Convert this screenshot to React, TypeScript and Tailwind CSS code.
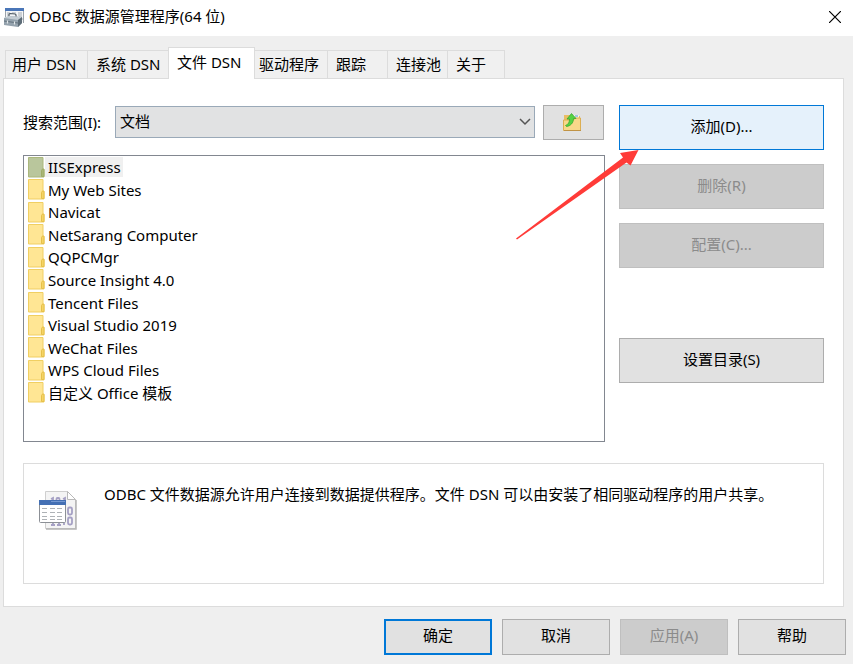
import type { ReactNode } from "react";
import { clsx } from "clsx";

const tabs = [
  { name: "用户 DSN", size: "w-[83px] pl-1.5" },
  { name: "系统 DSN", size: "w-[82px] pl-2" },
  { name: "文件 DSN", size: "w-[87px] pl-2", selected: true },
  { name: "驱动程序", size: "w-[74px] pl-1" },
  { name: "跟踪", size: "w-[61px] pl-2" },
  { name: "连接池", size: "w-[61px] pl-2" },
  { name: "关于", size: "w-[58px] pl-2" },
];

const folders = [
  "IISExpress",
  "My Web Sites",
  "Navicat",
  "NetSarang Computer",
  "QQPCMgr",
  "Source Insight 4.0",
  "Tencent Files",
  "Visual Studio 2019",
  "WeChat Files",
  "WPS Cloud Files",
  "自定义 Office 模板",
];

function ToolboxIcon() {
  return (
    <svg viewBox="0 0 20 20" className="size-5" aria-hidden="true">
      <path d="M1 1h19v13H1z" fill="#f3f5f7" />
      <path d="M1 0h19v3H1z" fill="#4a76b8" />
      <path d="M3 5h3M8 5h4M14 5h4M3 7h2M14 7h4M15 9h3M19 11h-1" stroke="#a4abb2" />
      <path d="M19.500 3v12M1.500 3v6" stroke="#9ba3aa" />
      <path d="M5 9V6.500Q5 5.500 6 5.500l5 .5q1 0 1 1V9" fill="none" stroke="#4c5862" strokeWidth="1.200" />
      <path d="M0 10l5-2 13 1v6l-4 4-14-2z" fill="#94a2ad" />
      <path d="M0 10l5-2 13 1-4 3z" fill="#c3ccd3" />
      <path d="M14 12l4-3v6l-4 4z" fill="#5d6c77" />
      <path d="M0 13l14 2 4-3" fill="none" stroke="#62717c" />
      <path d="M3.500 12.500v3M10.500 13.500v3" stroke="#e2e7ea" strokeWidth="1.200" />
    </svg>
  );
}

function FolderIcon({ selected }: { selected: boolean }) {
  return (
    <svg viewBox="0 0 17 21" className="h-[21px] w-[17px] shrink-0" aria-hidden="true">
      <path
        d="M.5.5h14.500v12h1v7.500H.5z"
        fill={selected ? "#b9c69c" : "#ffe694"}
        stroke={selected ? "#aab77c" : "#f0cf62"}
      />
      <path
        d="M13.500 19.500v-6l1-1.500h1.500v7.500z"
        fill={selected ? "#a9b676" : "#f5d465"}
        stroke={selected ? "#9eac67" : "#e6c04a"}
      />
    </svg>
  );
}

function UpFolderIcon() {
  return (
    <svg viewBox="0 0 20 20" className="size-5" aria-hidden="true">
      <path d="M2 3h7l1 1h8v14H2z" fill="#e9bd63" />
      <path d="M11 3h6v3h-6z" fill="#f7f4e3" />
      <path d="M13 4h3" stroke="#4f9be0" />
      <path d="M1.500 8h10l1.500-2h5.500v12.500h-17z" fill="#f8d88a" stroke="#dcae52" />
      <path d="M2 18.500h17" stroke="#c09345" />
      <path
        d="M3.500 13.500c3-1 4-3.500 4-6.500H5l4.500-5.500 4.500 5h-2.500c0 4.500-3 7.500-7 8z"
        fill="#55d143"
        stroke="#2ea52a"
        strokeWidth=".7"
      />
    </svg>
  );
}

function FileSourceIcon() {
  return (
    <svg viewBox="0 0 40 40" className="size-10 shrink-0" aria-hidden="true">
      <path d="M7.500 1.500h22l8 8v29h-30z" fill="#f4f4f4" stroke="#cfcfcf" />
      <path d="M38 10v29H8" fill="none" stroke="#b4b4b4" strokeWidth="1.500" />
      <path d="M29.500 1.500v8h8z" fill="#fff" stroke="#b9b9b9" />
      <g fill="none" stroke="#a5a0c4" strokeWidth="1.800">
        <path d="M13 9l2-1v4M25 9l2-1v4M18.500 12V9q0-1 1-1h1q1 0 1 1v3" />
        <rect x="30" y="17.500" width="4" height="7" rx="1.500" />
        <rect x="30" y="27.500" width="4" height="7" rx="1.500" />
        <path d="M15 32v3M21 32v3M26 30v5M13 35h4M19 35h4" />
      </g>
      <rect x="1.500" y="10.500" width="26" height="22" rx="1" fill="#fff" stroke="#8c9096" />
      <path d="M1 10h27v5H1z" fill="#4470b4" />
      <path d="M13 11.500h14" stroke="#7599d2" />
      <path
        d="M4 18.500h5M12 18.500h5M19 18.500h5M4 22.500h5M12 22.500h5M19 22.500h5M4 26.500h5M12 26.500h5M19 26.500h5M4 29.500h5M12 29.500h5M19 29.500h5"
        stroke="#aeb2b6"
      />
    </svg>
  );
}

function DialogButton({
  children,
  className,
  disabled,
}: {
  children: ReactNode;
  className?: string;
  disabled?: boolean;
}) {
  return (
    <button
      type="button"
      disabled={disabled}
      className={clsx(
        "flex items-center justify-center pb-1",
        disabled && "border border-[#bfbfbf] bg-[#cccccc] text-[#8b8b8b]",
        className,
      )}
    >
      {children}
    </button>
  );
}

export default function App() {
  return (
    <div className="flex min-h-screen flex-col bg-[#efefef] font-['Noto_Sans','Noto_Sans_CJK_SC',sans-serif] text-[15px] leading-5 text-black">
      {/* Title bar */}
      <header className="flex h-9 items-center justify-between bg-white pr-2 pl-1">
        <div className="flex items-center gap-[5px]">
          <ToolboxIcon />
          <h1 className="pb-1">ODBC 数据源管理程序(64 位)</h1>
        </div>
        <button type="button" aria-label="关闭" className="p-1 pb-1.5">
          <svg viewBox="0 0 12 12" className="size-3" aria-hidden="true">
            <path d="M0 0l12 12M12 0L0 12" stroke="#000" strokeWidth="1.200" />
          </svg>
        </button>
      </header>

      <main className="flex flex-1 flex-col pt-[11px] pr-[9px] pl-[3px]">
        {/* Tabs */}
        <div role="tablist" className="flex items-end pl-0.5">
          {tabs.map((tab) => (
            <button
              key={tab.name}
              type="button"
              role="tab"
              aria-selected={!!tab.selected}
              className={clsx(
                "-mr-px border border-b-0 border-[#dcdcdc] text-left whitespace-nowrap",
                tab.size,
                tab.selected ? "z-10 -mb-px h-8 bg-white pb-1" : "h-7 bg-[#f0f0f0] pb-0.5",
              )}
            >
              {tab.name}
            </button>
          ))}
        </div>

        {/* File DSN page */}
        <section className="border border-[#dcdcdc] bg-white px-[19px] pt-[26px] pb-[22px]">
          <div className="flex gap-[14px]">
            <div className="flex min-w-0 flex-1 flex-col gap-[15px]">
              <div className="flex items-start">
                <label htmlFor="scope" className="w-[92px] shrink-0 pt-[7px]">
                  搜索范围(I):
                </label>
                <div className="relative mt-px min-w-0 flex-1">
                  <select
                    id="scope"
                    className="h-8 w-full appearance-none border border-[#9aa9b8] bg-[#e1e2e3] pb-0.5 pl-1"
                  >
                    <option>文档</option>
                  </select>
                  <svg
                    viewBox="0 0 12 8"
                    className="pointer-events-none absolute top-3 right-1 h-2 w-3"
                    aria-hidden="true"
                  >
                    <path d="M1 1l5 5 5-5" fill="none" stroke="#555" strokeWidth="1.500" />
                  </svg>
                </div>
                <button
                  type="button"
                  aria-label="上一级"
                  className="mr-px ml-2 flex h-[35px] w-[61px] items-center justify-center border border-[#adadad] bg-[#e1e1e1] pr-1 pb-0.5"
                >
                  <UpFolderIcon />
                </button>
              </div>
              <div className="h-[287px] border border-[#828790] pl-1">
                <ul className="grid h-[248px] grid-rows-11">
                  {folders.map((name, i) => (
                    <li key={name} className="flex items-center">
                      <FolderIcon selected={i === 0} />
                      <span className={clsx("pr-0.5 pl-[3px]", i === 0 && "bg-[#f0f0f0]")}>
                        {name}
                      </span>
                    </li>
                  ))}
                </ul>
              </div>
            </div>

            <div className="relative flex w-[205px] shrink-0 flex-col gap-[14px]">
              <DialogButton className="h-[45px] border border-[#0078d7] bg-[#e5f1fb]">
                添加(D)...
              </DialogButton>
              <DialogButton disabled className="h-[45px]">
                删除(R)
              </DialogButton>
              <DialogButton disabled className="h-[45px]">
                配置(C)...
              </DialogButton>
              <DialogButton className="mt-14 h-[45px] border border-[#adadad] bg-[#e1e1e1]">
                设置目录(S)
              </DialogButton>
              {/* Arrow pointing at the add button */}
              <svg
                viewBox="0 0 124 92"
                className="pointer-events-none absolute top-[45px] -left-[104px] h-[92px] w-[124px]"
                aria-hidden="true"
              >
                <path
                  d="M1 88.500L108 7.500 105 3 123.500 0 115.500 15.500 111.500 12.500 2 89.500z"
                  fill="#ff3b38"
                />
              </svg>
            </div>
          </div>

          <div className="mt-[21px] flex h-[121px] items-start border border-[#dcdcdc] pt-5 pl-[14px]">
            <div className="pt-1.5">
              <FileSourceIcon />
            </div>
            <p className="pl-[26px]">
              ODBC 文件数据源允许用户连接到数据提供程序。文件 DSN 可以由安装了相同驱动程序的用户共享。
            </p>
          </div>
        </section>
      </main>

      <footer className="flex justify-end gap-[10px] pt-[12px] pr-[7px] pb-[9px]">
        <DialogButton className="h-9 w-[108px] border-2 border-[#0078d7] bg-[#e1e1e1]">
          确定
        </DialogButton>
        <DialogButton className="h-9 w-[108px] border border-[#adadad] bg-[#e1e1e1]">
          取消
        </DialogButton>
        <DialogButton disabled className="h-9 w-[108px]">
          应用(A)
        </DialogButton>
        <DialogButton className="h-9 w-[108px] border border-[#adadad] bg-[#e1e1e1]">
          帮助
        </DialogButton>
      </footer>
    </div>
  );
}
